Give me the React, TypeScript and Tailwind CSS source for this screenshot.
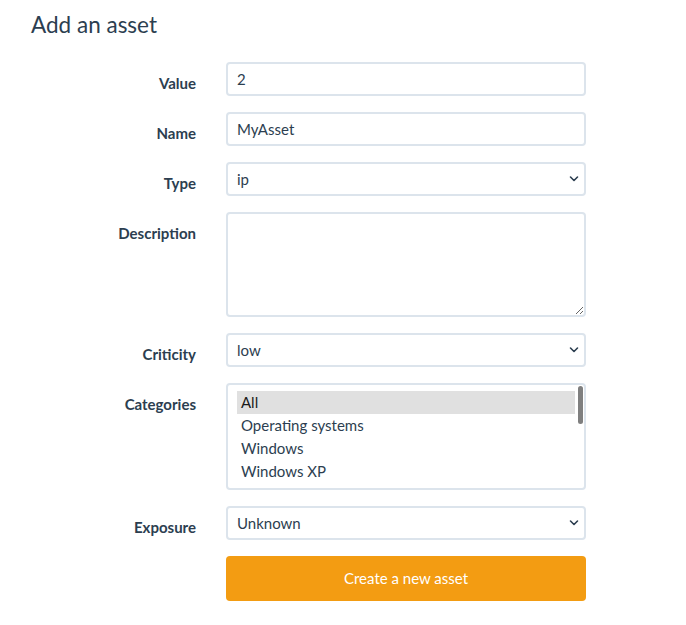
import { useState } from "react";

const Chevron = () => (
  <svg
    className="pointer-events-none absolute right-[7px] top-1/2 -translate-y-1/2"
    width="10"
    height="7"
    viewBox="0 0 10 7"
    fill="none"
  >
    <path d="M1.5 1.5 L5 5 L8.5 1.5" stroke="#2c3e50" strokeWidth="1.6" strokeLinecap="round" strokeLinejoin="round" />
  </svg>
);

const Label = ({ children }: { children: string }) => (
  <label className="pt-[11px] text-right text-[15px] leading-5 font-bold text-[#2c3e50]">{children}</label>
);

const inputCls =
  "h-[34px] w-full rounded-[4px] border-2 border-[#dce4ec] bg-white px-[9px] text-[15px] text-[#2c3e50] outline-none";

const Select = ({ value, options }: { value: string; options: string[] }) => (
  <div className="relative">
    <select defaultValue={value} className={`${inputCls} appearance-none`}>
      {options.map((o) => (
        <option key={o}>{o}</option>
      ))}
    </select>
    <Chevron />
  </div>
);

// only the rows that fit in the list box are shown
const categories = ["All", "Operating systems", "Windows", "Windows XP"];

export default function App() {
  const [selected, setSelected] = useState("All");

  return (
    <div className="min-h-screen bg-white px-4 font-['Lato',sans-serif] text-[#2c3e50]">
      <h3 className="pt-[11px] pl-[15px] text-[22.5px] leading-[28px] font-normal">Add an asset</h3>

      <form className="mt-[23px] grid grid-cols-[180px_360px] gap-x-[30px] gap-y-4">
        <Label>Value</Label>
        <input className={inputCls} defaultValue="2" />

        <Label>Name</Label>
        <input className={inputCls} defaultValue="MyAsset" />

        <Label>Type</Label>
        <Select value="ip" options={["ip", "domain", "url"]} />

        <Label>Description</Label>
        <textarea className="block h-[105px] w-full resize-y rounded-[4px] border-2 border-[#dce4ec] bg-white px-[9px] py-1 text-[15px] outline-none" />

        <Label>Criticity</Label>
        <Select value="low" options={["low", "medium", "high"]} />

        <Label>Categories</Label>
        <div className="relative h-[107px] rounded-[4px] border-2 border-[#dce4ec] bg-white pt-[6px] pr-[9px] pl-[9px]">
          {categories.map((c) => (
            <div
              key={c}
              onClick={() => setSelected(c)}
              className={`h-[23px] px-[4px] text-[15px] leading-[23px] ${
                selected === c ? "bg-[#e0e0e0] text-[#1a1a1a]" : "text-[#2c3e50]"
              }`}
            >
              {c}
            </div>
          ))}
          <div className="absolute top-[1px] right-[1px] h-[38px] w-[5px] rounded-full bg-[#7f7f7f]" />
        </div>

        <Label>Exposure</Label>
        <Select value="Unknown" options={["Unknown", "Internal", "External"]} />

        <div />
        <button
          type="button"
          className="h-[45px] w-full rounded-[4px] bg-[#f39c12] text-[15px] text-white"
        >
          Create a new asset
        </button>
      </form>
    </div>
  );
}
